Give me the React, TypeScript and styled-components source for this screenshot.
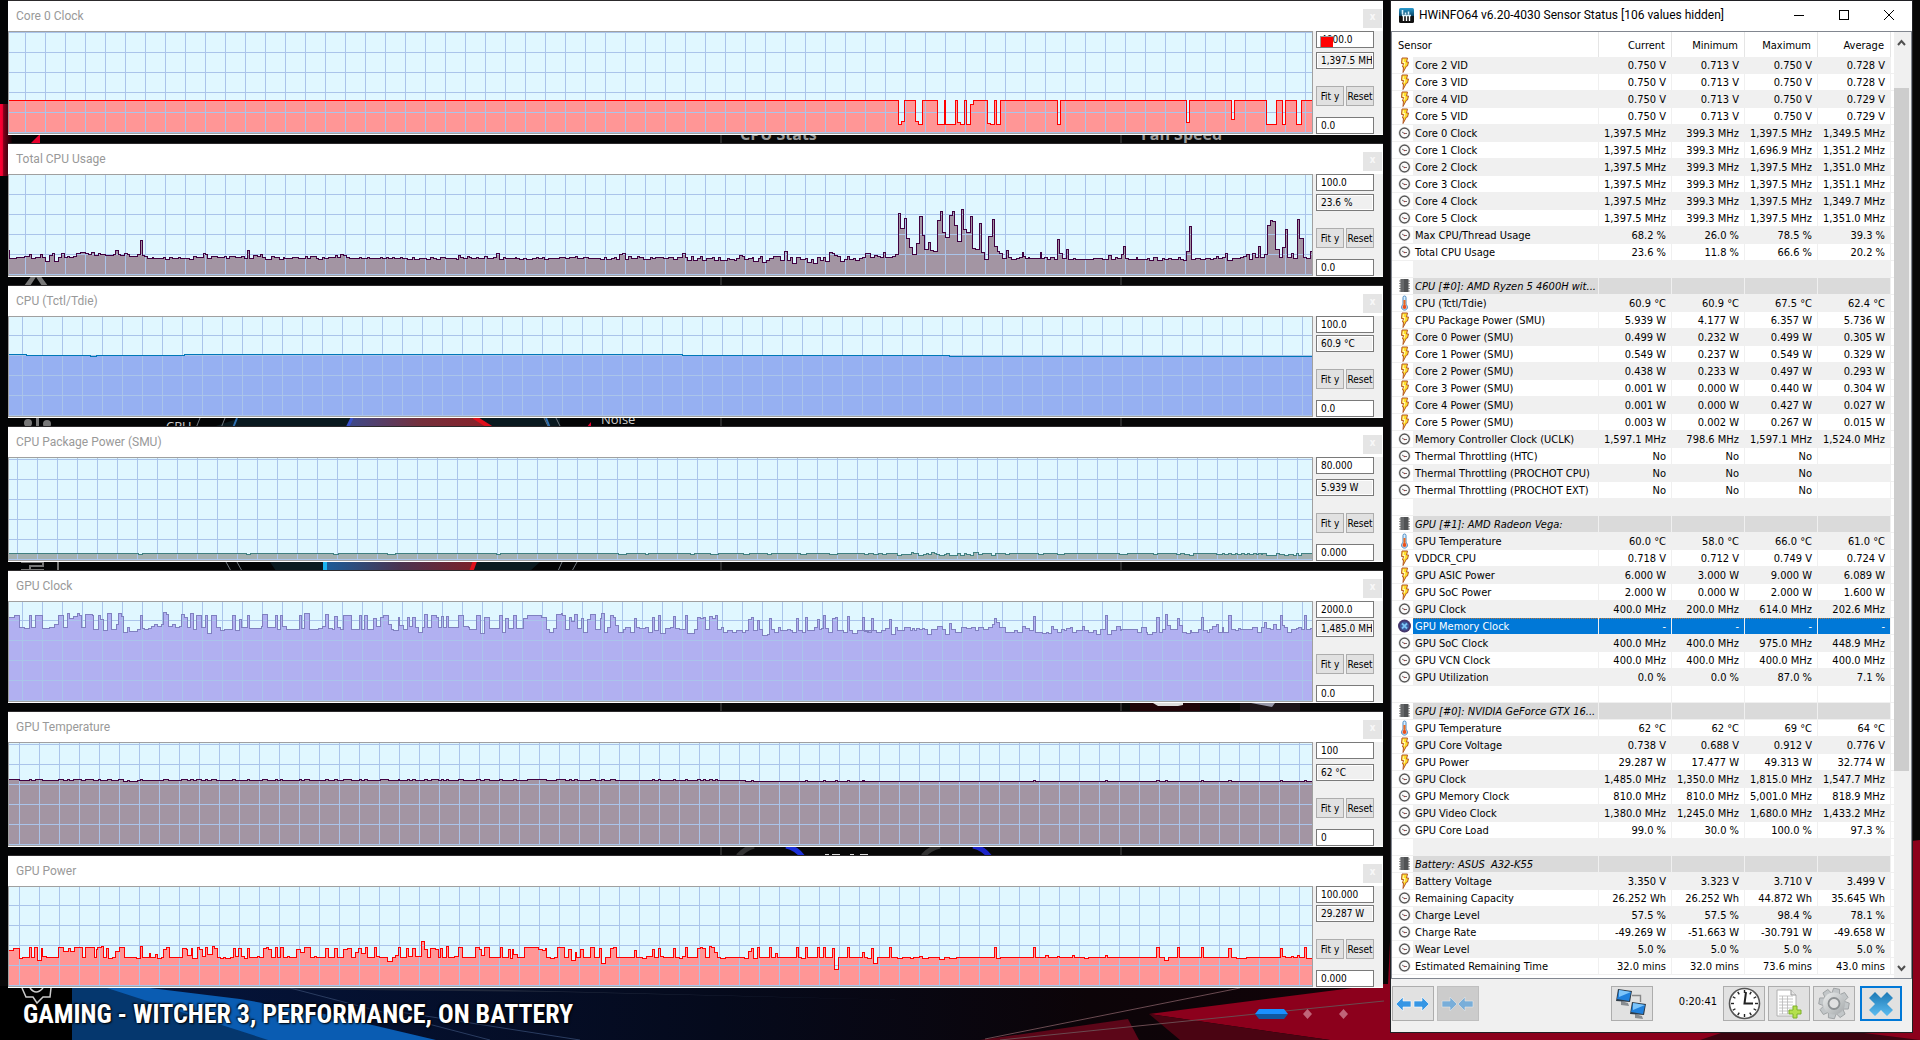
import React, { useId } from "react";
import styled, { createGlobalStyle, css } from "styled-components";

/* ---------- theme ---------- */

const UI = `"DejaVu Sans Condensed", "Noto Sans", sans-serif`;
const TITLE = `Roboto, "Open Sans", sans-serif`;

const GlobalStyle = createGlobalStyle`
  *, *::before, *::after { box-sizing: border-box; }
  body { margin: 0; background: #050506; font-family: ${UI}; font-size: 11px; color: #000; }
  button, input { font: inherit; color: inherit; }
`;

/* ---------- graph data ---------- */

type Point = [number, number];

/* A stretch of recorded samples: where it starts, samples per pixel, and "x:y" steps. */
const stretch = (x0: number, perPx: number, y0: number, steps: string): Point[] =>
  steps
    .trim()
    .split(/\s+/)
    .map((s) => {
      const [x, y] = s.split(":").map(Number);
      return [Math.round(x0 + x / perPx), Math.floor(y0 + y / 3)];
    });

const coreClock: Point[] = [
  [8, 100],
  ...stretch(860, 2.958, 0, `0:301 111:373 122:364 131:301 164:364 172:373 184:301 227:373 247:301 252:373 282:301
  288:367 297:373 309:301 315:373 326:313 335:301 377:370 386:373 397:301 403:373 415:301 582:373 593:301 963:367
  974:301 1096:358 1107:301 1202:373 1232:301 1247:373 1258:301 1291:373 1303:301`),
];

const cpuUsage: Point[] = [
  ...stretch(0, 2.45, 0, `20:751 23:775 40:772 60:769 70:763 75:775 85:772 98:763 104:772 110:784 120:766 128:760
  133:784 143:772 150:760 156:772 163:769 170:772 180:769 187:760 195:757 208:760 215:763 224:757 230:766 240:760
  245:763 258:766 276:763 282:751 288:763 294:766 305:760 311:763 317:769 335:763 342:721 347:766 354:769 360:775
  372:772 376:775 400:772 405:778 415:772 421:775 437:772 441:775 463:778 474:769 480:772 497:760 503:763 508:775
  518:769 532:772 549:769 554:775 561:769 575:772 590:769 598:775 606:751 611:775 621:766 630:769 637:763 641:772
  649:778 665:769 671:772 684:778 694:772 697:775 715:772 731:775 747:769 752:775 760:769 773:775 780:778 790:772
  795:775 803:772 820:766 826:772 834:763 840:766 848:772 854:775 880:772 884:775 900:772 905:775 931:772 935:775
  946:772 951:775 960:772 965:775 981:772 986:775 996:778 1010:772 1015:778 1026:775 1044:778 1054:772 1060:775
  1067:778 1077:772 1090:775 1116:778 1121:766 1127:772 1135:775 1143:769 1149:772 1155:775 1165:772 1171:775
  1187:769 1192:775 1208:772 1216:760 1222:778 1233:772 1238:775 1261:772 1265:775 1272:778 1282:775 1288:778
  1304:775 1312:772 1318:775 1328:772 1334:778 1342:775 1370:772 1385:775 1395:772 1408:769 1413:775 1429:772
  1441:775`),
  ...stretch(600, 3, 90, `0:508 12:502 18:508 32:505 42:502 48:508 57:493 67:490 74:508 85:499 92:505 112:499 118:502
  128:508 149:502 155:505 166:502 190:505 203:502 215:502 218:508 230:502 247:490 254:502 261:511 273:499 280:511
  290:505 300:499 307:511 318:505 337:502 343:511 355:502 361:511 382:505 388:508 402:511 409:505 417:496 426:499
  433:508 445:505 455:502 460:514 473:505 480:499 487:517 499:511 508:505 520:499 541:511 553:484 560:511 571:502
  577:520 589:502 601:508 615:505 622:517 633:508 640:520 652:502 659:511 670:502 676:514 688:487 697:490 703:496
  712:499 721:514 733:508 741:499 748:508 760:505 766:511 778:505 787:502 796:490 811:502 823:496 832:499 841:502
  850:487 856:502 877:499 886:493`),
  ...stretch(860, 2.958, 0, `113:640 119:685 131:655 137:715 145:741 154:763 167:730 176:649 182:706 190:747 202:727
  208:751 217:754 229:661 238:634 244:697 252:712 264:646 273:634 279:676 288:724 300:628 306:688 315:697 326:649
  332:745 340:748 353:670 359:757 368:778 380:709 389:658 395:739 404:754 412:760 421:775 433:751 439:772 447:778
  460:775 470:772 478:757 483:769 489:775 496:772 501:775 516:774 531:757 536:775 545:772 552:778 563:772 574:778
  584:718 590:760 598:775 610:748 616:778 630:775 636:778 690:775 715:778 735:766 741:778 753:772 760:776 771:763
  779:739 785:775 792:778 816:772 820:778 850:775 856:781 868:772 880:781 892:775 900:779 912:775 920:779 940:772
  946:778 954:781 965:754 974:679 980:778 992:775 1007:778 1020:775 1035:779 1045:775 1054:769 1060:775 1070:772
  1081:760 1087:781 1099:775 1125:772 1134:769 1143:763 1150:778 1161:760 1167:771 1178:739 1184:772 1196:763
  1205:676 1214:661 1220:664 1229:748 1238:773 1249:742 1258:688 1264:772 1276:760 1282:775 1294:658 1300:715
  1309:772 1318:775 1330:754`),
];

const cpuTemp: Point[] = [[8, 354], [26, 355], [90, 356], [96, 355], [184, 354], [682, 355], [949, 356]];

const cpuPower: Point[] = [
  ...stretch(0, 2.45, 400, `20:460 339:463 349:460 603:463 613:460 817:463 827:460 949:463 967:460 1214:463 1224:460
  1515:463 1533:460 1580:463 1588:460 1690:463 1700:460 1740:463 1760:460 1820:463 1835:460 1880:463 1890:460
  1960:463 1975:460 2030:463 2050:460`),
  ...stretch(860, 2.958, 400, `0:460 12:463 25:460 38:463 52:460 65:463 78:460 110:466 122:463 150:457 158:460 173:466
  185:463 196:460 202:463 210:457 218:460 226:463 234:466 248:463 255:460 262:466 288:460 297:466 309:460 315:463
  325:466 335:457 350:463 362:460 388:466 398:460 430:463 442:460 527:463 540:460 582:463 602:460 766:463 789:460
  866:463 878:460 936:463 948:460 957:463 972:466 984:460 1052:463 1070:460 1078:463 1090:460 1098:463 1108:460
  1115:463 1128:460 1135:463 1145:460 1150:463 1163:460 1170:463 1178:460 1185:463 1190:460 1202:466 1232:460
  1240:463 1255:466 1265:463 1282:466 1290:460 1296:466 1303:460`),
];

const gpuClock: Point[] = [
  ...stretch(0, 2.45, 400, `20:652 34:646 46:682 58:685 70:646 75:682 85:646 104:685 119:682 133:673 143:646 155:682
  165:640 170:655 180:649 188:640 194:646 199:682 209:643 226:646 229:688 239:646 244:658 252:691 261:640 272:688
  283:673 290:640 296:649 302:697 312:682 317:694 335:688 342:646 347:685 354:688 362:685 370:679 378:673 385:679
  394:673 400:637 406:643 412:679 422:673 428:682 438:679 444:643 450:652 457:682 466:640 472:688 481:646 493:682
  503:646 508:700 518:646 530:682 538:691 550:688 569:646 575:691 585:658 590:682 604:646 611:685 640:679 643:643
  655:682 673:646 678:688 687:646 692:679 700:688 732:646 737:685 746:640 758:688 778:685 790:679 797:643 803:685
  813:688 819:649 825:682 832:688 841:646 861:688 880:646 884:688 892:646 898:688 914:655 922:679 930:652 938:646
  950:673 957:688 964:691 974:652 978:676 987:688 996:652 1002:679 1010:652 1016:682 1024:697 1033:682 1040:643
  1046:682 1055:646 1067:652 1072:682 1080:649 1086:682 1093:649 1098:682 1122:646 1134:679 1147:682 1150:688
  1165:646 1177:700 1187:652 1199:685 1223:646 1230:697 1238:655 1245:685 1257:646 1265:685 1282:655 1290:646
  1325:652 1338:688 1346:697 1356:685 1363:643 1375:640 1378:646 1385:688 1393:652 1400:664 1407:643 1413:685
  1423:655 1428:697 1438:658 1445:643 1457:688`),
  ...stretch(600, 3, 590, `0:85 4:70 11:127 22:112 31:76 39:82 46:106 55:127 68:118 76:112 91:127 103:85 109:112
  118:115 135:112 145:127 157:82 163:121 175:76 181:130 194:115 210:112 220:79 226:115 236:118 256:76 262:130
  283:118 292:82 300:85 310:82 316:118 328:79 335:85 346:76 352:118 362:112 370:127 382:121 397:127 409:121 425:127
  436:121 445:88 454:82 460:121 472:91 478:118 487:136 500:133 508:85 514:118 523:127 535:112 541:121 562:118
  570:121 577:127 589:85 595:121 607:127 616:82 622:121 643:112 652:88 658:118 664:115 670:76 676:115 685:127
  697:85 706:82 712:121 730:127 742:79 748:121 757:130 770:121 787:82 793:124 805:127 814:85 820:121`),
  ...stretch(860, 2.958, 400, `0:691 7:652 13:691 22:697 34:655 39:691 48:697 63:691 75:685 87:658 93:703 104:682
  110:691 130:682 147:691 155:685 160:691 167:685 175:688 184:685 190:688 199:703 211:688 228:679 244:688 252:703
  264:670 270:688 280:697 300:682 315:685 327:682 341:691 350:682 365:688 380:682 389:673 397:655 403:667 410:682
  430:697 455:691 464:697 479:679 487:685 500:691 513:649 519:697 537:700 550:697 555:700 566:679 572:688 582:697
  595:688 602:691 610:685 620:682 627:697 640:691 656:679 662:691 675:697 690:691 699:703 711:688 726:646 732:703
  743:691 758:679 768:691 773:688 820:697 832:682 845:697 850:703 865:697 877:652 883:697 892:688 903:643 909:676
  918:688 938:655 944:676 953:697 963:700 975:691 980:697 1000:688 1010:652 1016:691 1025:697 1033:688 1040:679
  1052:673 1060:697 1070:682 1075:697 1090:646 1096:688 1110:691 1117:685 1125:688 1160:682 1175:697 1187:682
  1196:667 1202:685 1214:688 1222:673 1230:688 1241:646 1247:676 1255:682 1264:697 1276:688 1290:685 1297:682
  1303:688 1312:646 1318:688 1330:685`),
];

/* The temperature follows the clock by a degree: every boost shows as a one-pixel bump. */
const gpuTemp: Point[] = gpuClock.map(([x, y]) => {
  const rest = x < 745 ? 780 : 781;
  return [x, y < 618 ? rest - 1 : x > 60 && x < 140 && y > 630 ? 781 : rest];
});

const gpuPower: Point[] = [
  ...stretch(0, 2.24, 820, `18:391 30:385 42:415 50:412 65:382 70:412 77:382 82:421 91:385 95:409 103:412 131:382
  141:394 152:385 157:394 165:382 183:412 191:382 210:412 215:388 218:382 226:379 230:412 238:385 243:415 252:412
  258:394 266:382 277:412 305:415 313:379 317:412 333:400 337:412 347:403 352:415 361:412 366:388 372:382 378:412
  407:385 416:388 419:406 427:385 431:415 441:382 446:388 453:409 459:382 464:403 474:379 479:385 485:412 492:415
  500:412 503:415 515:412 521:385 526:409 534:385 540:409 546:415 554:385 558:412 575:409 580:412 588:385 596:382
  600:388 606:412 615:382 620:412 628:382 634:412 643:409 647:412 662:388 672:397 682:382 694:412 704:409 708:412
  729:385 735:412 749:385 754:412 768:388 778:385 787:412 796:397 802:385 809:400 817:382 822:412 837:382 842:409
  850:412 866:424 877:412 885:406 892:382 896:412 910:385 915:409 924:385 929:409 944:364 949:388 956:412 963:385
  975:388 981:412 985:385 991:412 998:379 1003:412 1018:409 1025:382 1035:412 1065:382 1073:388 1077:406 1085:382
  1096:412 1119:382 1125:412 1137:388 1142:415 1146:388 1150:403 1158:412 1173:382 1205:388 1213:391 1220:385
  1223:412 1231:415 1240:412 1247:382 1264:412 1272:388 1278:421 1287:397 1290:412 1300:388 1306:412 1321:382
  1331:412 1341:385`),
  ...stretch(600, 3, 590, `2:1120 14:1102 31:1075 40:1072 47:1102 103:1081 109:1102 127:1105 139:1099 157:1078
  163:1102 175:1075 181:1099 190:1102 220:1075 226:1102 236:1105 247:1099 256:1072 262:1102 292:1075 301:1072
  306:1075 316:1102 328:1069 334:1072 343:1087 352:1102 361:1105 374:1102 433:1105 445:1084 454:1075 460:1105
  472:1072 478:1102 508:1072 514:1102 526:1090 532:1102 589:1072 595:1102 604:1105 616:1072 622:1102 652:1072
  658:1102 670:1072 676:1102 697:1075 703:1138 715:1102 742:1072 748:1102`),
  ...stretch(860, 2.958, 820, `0:412 7:397 13:412 22:415 34:385 39:430 51:412 87:382 93:412 110:415 123:412 147:415
  158:412 176:409 182:415 202:412 235:418 247:412 262:415 283:412 397:382 403:415 415:412 513:382 519:412 548:406
  555:412 584:409 590:412 628:406 634:412 662:415 673:412 726:406 732:412 877:382 883:412 900:421 912:412 939:382
  945:412 1010:382 1016:412 1090:385 1096:412 1113:415 1143:412 1241:385 1247:409 1256:412 1276:409 1282:412
  1294:406 1300:412 1312:382 1318:415`),
];

interface Graph {
  title: string;
  max: string;
  now: string;
  min: string;
  top: number; /* first plotted row */
  height: number;
  phase: number; /* shift of the vertical grid lines */
  line: string;
  fill: string;
  data: Point[];
  swatch?: boolean;
}

const RED = { line: "#ff0000", fill: "#ff9696" };
const PLUM = { line: "#400040", fill: "#a395a3" };

const graphs: Graph[] = [
  { title: "Core 0 Clock", max: "4000.0", now: "1,397.5 MHz", min: "0.0", top: 31, height: 103, phase: 16, ...RED, data: coreClock, swatch: true },
  { title: "Total CPU Usage", max: "100.0", now: "23.6 %", min: "0.0", top: 174, height: 102, phase: 16, ...PLUM, data: cpuUsage },
  { title: "CPU (Tctl/Tdie)", max: "100.0", now: "60.9 °C", min: "0.0", top: 316, height: 101, phase: 13, line: "#0078b8", fill: "#96b0f2", data: cpuTemp },
  { title: "CPU Package Power (SMU)", max: "80.000", now: "5.939 W", min: "0.000", top: 457, height: 104, phase: 8, line: "#408080", fill: "#a3b1b1", data: cpuPower },
  { title: "GPU Clock", max: "2000.0", now: "1,485.0 MHz", min: "0.0", top: 601, height: 101, phase: 13, line: "#8080c0", fill: "#b1b0f1", data: gpuClock },
  { title: "GPU Temperature", max: "100", now: "62 °C", min: "0", top: 742, height: 104, phase: 10, ...PLUM, data: gpuTemp },
  { title: "GPU Power", max: "100.000", now: "29.287 W", min: "0.000", top: 886, height: 101, phase: 10, ...RED, data: gpuPower },
];

/* ---------- sensor data ---------- */

type Kind = "bolt" | "clock" | "temp" | "chip" | "off";
type Row = { kind?: Kind; name?: string; values?: string[] };

const unit = (kind: Kind, name: string, u: string, v: string): Row => ({
  kind,
  name,
  values: v.split(" ").map((n) => `${n}${u}`),
});
const group = (name: string): Row => ({ kind: "chip", name });

const rows: Row[] = [
  unit("bolt", "Core 2 VID", " V", "0.750 0.713 0.750 0.728"),
  unit("bolt", "Core 3 VID", " V", "0.750 0.713 0.750 0.728"),
  unit("bolt", "Core 4 VID", " V", "0.750 0.713 0.750 0.729"),
  unit("bolt", "Core 5 VID", " V", "0.750 0.713 0.750 0.729"),
  unit("clock", "Core 0 Clock", " MHz", "1,397.5 399.3 1,397.5 1,349.5"),
  unit("clock", "Core 1 Clock", " MHz", "1,397.5 399.3 1,696.9 1,351.2"),
  unit("clock", "Core 2 Clock", " MHz", "1,397.5 399.3 1,397.5 1,351.0"),
  unit("clock", "Core 3 Clock", " MHz", "1,397.5 399.3 1,397.5 1,351.1"),
  unit("clock", "Core 4 Clock", " MHz", "1,397.5 399.3 1,397.5 1,349.7"),
  unit("clock", "Core 5 Clock", " MHz", "1,397.5 399.3 1,397.5 1,351.0"),
  unit("clock", "Max CPU/Thread Usage", " %", "68.2 26.0 78.5 39.3"),
  unit("clock", "Total CPU Usage", " %", "23.6 11.8 66.6 20.2"),
  {},
  group("CPU [#0]: AMD Ryzen 5 4600H wit..."),
  unit("temp", "CPU (Tctl/Tdie)", " °C", "60.9 60.9 67.5 62.4"),
  unit("bolt", "CPU Package Power (SMU)", " W", "5.939 4.177 6.357 5.736"),
  unit("bolt", "Core 0 Power (SMU)", " W", "0.499 0.232 0.499 0.305"),
  unit("bolt", "Core 1 Power (SMU)", " W", "0.549 0.237 0.549 0.329"),
  unit("bolt", "Core 2 Power (SMU)", " W", "0.438 0.233 0.497 0.293"),
  unit("bolt", "Core 3 Power (SMU)", " W", "0.001 0.000 0.440 0.304"),
  unit("bolt", "Core 4 Power (SMU)", " W", "0.001 0.000 0.427 0.027"),
  unit("bolt", "Core 5 Power (SMU)", " W", "0.003 0.002 0.267 0.015"),
  unit("clock", "Memory Controller Clock (UCLK)", " MHz", "1,597.1 798.6 1,597.1 1,524.0"),
  unit("clock", "Thermal Throttling (HTC)", "", "No No No"),
  unit("clock", "Thermal Throttling (PROCHOT CPU)", "", "No No No"),
  unit("clock", "Thermal Throttling (PROCHOT EXT)", "", "No No No"),
  {},
  group("GPU [#1]: AMD Radeon Vega:"),
  unit("temp", "GPU Temperature", " °C", "60.0 58.0 66.0 61.0"),
  unit("bolt", "VDDCR_CPU", " V", "0.718 0.712 0.749 0.724"),
  unit("bolt", "GPU ASIC Power", " W", "6.000 3.000 9.000 6.089"),
  unit("bolt", "GPU SoC Power", " W", "2.000 0.000 2.000 1.600"),
  unit("clock", "GPU Clock", " MHz", "400.0 200.0 614.0 202.6"),
  unit("off", "GPU Memory Clock", "", "- - - -"),
  unit("clock", "GPU SoC Clock", " MHz", "400.0 400.0 975.0 448.9"),
  unit("clock", "GPU VCN Clock", " MHz", "400.0 400.0 400.0 400.0"),
  unit("clock", "GPU Utilization", " %", "0.0 0.0 87.0 7.1"),
  {},
  group("GPU [#0]: NVIDIA GeForce GTX 16..."),
  unit("temp", "GPU Temperature", " °C", "62 62 69 64"),
  unit("bolt", "GPU Core Voltage", " V", "0.738 0.688 0.912 0.776"),
  unit("bolt", "GPU Power", " W", "29.287 17.477 49.313 32.774"),
  unit("clock", "GPU Clock", " MHz", "1,485.0 1,350.0 1,815.0 1,547.7"),
  unit("clock", "GPU Memory Clock", " MHz", "810.0 810.0 5,001.0 818.9"),
  unit("clock", "GPU Video Clock", " MHz", "1,380.0 1,245.0 1,680.0 1,433.2"),
  unit("clock", "GPU Core Load", " %", "99.0 30.0 100.0 97.3"),
  {},
  group("Battery: ASUS  A32-K55"),
  unit("bolt", "Battery Voltage", " V", "3.350 3.323 3.710 3.499"),
  unit("clock", "Remaining Capacity", " Wh", "26.252 26.252 44.872 35.645"),
  unit("clock", "Charge Level", " %", "57.5 57.5 98.4 78.1"),
  unit("clock", "Charge Rate", " W", "-49.269 -51.663 -30.791 -49.658"),
  unit("clock", "Wear Level", " %", "5.0 5.0 5.0 5.0"),
  unit("clock", "Estimated Remaining Time", " mins", "32.0 32.0 73.6 43.0"),
];

/* ---------- page layout ---------- */

const Desktop = styled.div`
  position: relative;
  isolation: isolate;
  display: flex;
  gap: 8px;
  min-height: 100vh;
  padding: 0 8px;
  overflow: hidden;
`;

const Wallpaper = styled.svg`
  position: absolute;
  inset: 0;
  z-index: -1;
  width: 100%;
  height: 100%;
`;

const Graphs = styled.main`
  flex: 1;
  min-width: 0;
  display: flex;
  flex-direction: column;
  gap: 9px;
  padding-top: 1px;
`;

const Panel = styled.section`
  background: #fff;
  padding-bottom: 1px;
  box-shadow: 0 -1px 0 #2c2a2c;
`;

const PanelTitle = styled.header`
  display: flex;
  align-items: center;
  justify-content: space-between;
  height: 30px;
  padding: 4px 1px 0 8px;
  h2 {
    margin: 0 0 4px;
    font: 400 12px/16px ${TITLE};
    color: #999;
  }
`;

const PanelClose = styled.button`
  width: 19px;
  height: 19px;
  padding: 0 0 2px;
  border: 0;
  background: #e5e5e5;
  color: #f8f8f8;
  font: 700 11px/16px ${TITLE};
`;

const PanelBody = styled.div<{ $height: number }>`
  display: flex;
  height: ${(p) => p.$height}px;
  background: #f0f0f0;
`;

const Plot = styled.div`
  flex: 1;
  min-width: 0;
  border: 1px solid #a0a0a0;
  background: #e0f7ff;
  svg {
    display: block;
    width: 100%;
    height: 100%;
  }
`;

const Controls = styled.div`
  position: relative;
  display: flex;
  flex-direction: column;
  width: 70px;
  padding: 0 9px 0 3px;
`;

const Field = styled.input`
  width: 100%;
  height: 17px;
  padding: 0 1px 0 4px;
  border: 1px solid #7a7a7a;
  border-radius: 0;
  background: #fff;
  font-size: 10px;
  &:read-only {
    margin: auto 0 17px;
    background: #f0f0f0;
    box-shadow: inset 0 0 0 1px #fff;
  }
`;

const Pair = styled.div`
  display: flex;
  gap: 2px;
  margin-bottom: 11px;
`;

const SmallButton = styled.button`
  flex: 1;
  height: 20px;
  padding: 0;
  border: 1px solid #adadad;
  background: #e1e1e1;
  font-size: 10px;
  white-space: nowrap;
`;

const Swatch = styled.span`
  position: absolute;
  top: 5px;
  left: 7px;
  width: 13px;
  height: 11px;
  border: solid #999;
  border-width: 1px 0 0 1px;
  background: #f00;
`;

const Caption = styled.footer`
  flex: 1;
  display: flex;
  align-items: center;
  justify-content: space-between;
  min-height: 44px;
  margin-top: -9px;
  padding: 0 34px 0 15px;
  h1 {
    margin: 0;
    font: 700 26px/40px "Roboto Condensed", "Open Sans Condensed", Roboto, sans-serif;
    color: #fff;
    text-shadow: 1px 1px 2px #000, -1px -1px 2px #000;
    white-space: nowrap;
  }
`;

/* ---------- sensor window ---------- */

const Window = styled.section`
  flex: none;
  display: flex;
  flex-direction: column;
  width: 521px;
  margin: 1px 0 8px;
  background: #f0f0f0;
  box-shadow: 0 0 0 1px #202024;
`;

const TitleBar = styled.header`
  display: flex;
  align-items: center;
  height: 30px;
  padding: 0 17px 2px 8px;
  background: #fff;
  h2 {
    flex: 1;
    margin: 0 0 0 5px;
    font: 400 12px/16px ${TITLE};
    white-space: nowrap;
  }
`;

const WindowButton = styled.button`
  display: flex;
  width: 12px;
  height: 12px;
  margin-left: 33px;
  padding: 0;
  border: 0;
  background: none;
`;

const List = styled.div`
  flex: 1;
  display: flex;
  border: 1px solid #828790;
  background: #fff;
`;

const Table = styled.table`
  flex: 1;
  align-self: flex-start;
  table-layout: fixed;
  border-collapse: separate;
  border-spacing: 0;
  width: 0;
`;

const Head = styled.th<{ $left?: boolean }>`
  height: 25px;
  padding: 2px 6px 0;
  border-right: 1px solid #e5e5e5;
  font-weight: 400;
  text-align: ${(p) => (p.$left ? "left" : "right")};
`;

const dots = "repeating-linear-gradient(90deg, #c07838 0 1px, #0078d7 1px 2px) top / 100% 1px no-repeat #0078d7";

const Line = styled.tr<{ $odd: boolean; $kind?: Kind }>`
  --fill: ${(p) => (p.$kind === "off" ? dots : p.$kind === "chip" ? "#dadada" : p.$odd ? "#fff" : "#f0f0f0")};
  ${(p) => p.$kind === "off" && css`color: #fff;`}
  ${(p) => p.$kind === "chip" && css`font-style: italic;`}
`;

const Cell = styled.td`
  height: 17px;
  padding: 2px 5px 0 0;
  border: solid #f0f0f0;
  border-width: 0 1px 1px 0;
  background: var(--fill);
  line-height: 14px;
  text-align: right;
  white-space: pre;
  &:last-child { border-right: 0; background: #fff; }
`;

const NameCell = styled(Cell)`
  padding: 2px 0 0 2px;
  text-align: left;
  overflow: hidden;
`;

const IconCell = styled(Cell)`
  padding: 0 0 0 6px;
  border-right: 0;
  background: #fff;
  svg { display: block; }
`;

const ScrollBar = styled.div`
  display: flex;
  flex-direction: column;
  width: 17px;
  padding-right: 2px;
  background: #f0f0f0;
`;

const ScrollButton = styled.button`
  height: 20px;
  padding: 0;
  border: 0;
  background: none;
`;

const Track = styled.div`
  flex: 1;
  padding-top: 36px;
`;

const Thumb = styled.div`
  height: 80%;
  max-height: 683px;
  background: #cdcdcd;
`;

const ToolBar = styled.footer`
  display: flex;
  gap: 3px;
  height: 53px;
  padding: 7px 10px 0 1px;
`;

const Tool = styled.button<{ $state?: "off" | "focus" }>`
  display: grid;
  place-items: center;
  width: 42px;
  height: 35px;
  padding: 0;
  border: 1px solid #adadad;
  background: #e1e1e1;
  ${(p) => p.$state === "off" && css`background: #ccc; border-color: #bfbfbf;`}
  ${(p) => p.$state === "focus" && css`border: 2px solid #0078d7; margin-left: 2px;`}
`;

const Spacer = styled.span`
  flex: 1;
`;

const Elapsed = styled.time`
  width: 64px;
  padding-right: 3px;
  line-height: 32px;
  text-align: right;
`;

/* ---------- icons ---------- */

const Bolt = () => (
  <svg width="14" height="16" viewBox="0 0 14 16">
    <path d="M4 1H9.500L8.500 5H10.500L9.500 9H8.500L5 15.500L5.500 10H4.500L5.500 6.500H3.500Z" fill="#ffdf2a" stroke="#b4582a" />
    <path d="M5.500 2.500L5 5.500H7L6 9" fill="none" stroke="#fff8c0" />
  </svg>
);

const Clock = () => (
  <svg width="14" height="16" viewBox="0 0 14 16">
    <circle cx="6.500" cy="8" r="6" fill="#c8c8c8" />
    <circle cx="6.500" cy="8" r="4.800" fill="#fafafa" stroke="#505050" strokeWidth="1.200" />
    <path d="M4 7L6.500 8.500H9" fill="none" stroke="#707070" />
    <circle cx="6.500" cy="8.500" r=".7" fill="#b03030" />
  </svg>
);

const Thermo = () => (
  <svg width="14" height="16" viewBox="0 0 14 16">
    <path d="M5 2.500a1.500 1.500 0 0 1 3 0V9.500a3 3 0 1 1-3 0Z" fill="#d8efff" stroke="#4a88c0" />
    <rect x="5.500" y="5" width="2" height="6" fill="#f06a1e" />
    <circle cx="6.500" cy="12" r="2" fill="#e8501e" />
  </svg>
);

const Chip = () => (
  <svg width="14" height="16" viewBox="0 0 14 16">
    <path d="M1 3H12M1 5.500H12M1 8H12M1 10.500H12M1 13H12" stroke="#909090" />
    <rect x="2.500" y="1" width="8" height="13" fill="#505254" />
    <rect x="3" y="1" width="3" height="13" fill="#66686a" />
  </svg>
);

const Off = () => (
  <svg width="14" height="16" viewBox="0 0 14 16">
    <circle cx="6.500" cy="8" r="6.500" fill="#46376e" />
    <circle cx="6.500" cy="8" r="4.600" fill="#3c5a9c" />
    <path d="M4 5.500L9 10.500M9 5.500L4 10.500" stroke="#7cc4f4" strokeWidth="1.800" />
  </svg>
);

const icons: Record<Kind, React.FC> = { bolt: Bolt, clock: Clock, temp: Thermo, chip: Chip, off: Off };

const AppIcon = () => (
  <svg width="15" height="15" viewBox="0 0 15 15">
    <defs>
      <linearGradient id="app" x2="0" y2="1">
        <stop offset="0" stopColor="#2a9cd0" />
        <stop offset=".5" stopColor="#0c4a6c" />
        <stop offset=".55" stopColor="#111" />
      </linearGradient>
    </defs>
    <rect width="15" height="15" rx="1.5" fill="url(#app)" />
    <path d="M3.500 2V6.500M6.500 4.500V6.500M9.500 3.500V6.500M3 7.500H12" stroke="#d8f2ff" strokeWidth="1.600" />
    <path d="M4.500 8V13M7.500 8V13M10.500 8V13" stroke="#fff" strokeWidth="1.400" />
  </svg>
);

const LEFT_ARROW = "M1 9L8 2V6H16V12H8V16Z";
const RIGHT_ARROW = "M17 9L10 2V6H2V12H10V16Z";

const Arrows = ({ inward }: { inward?: boolean }) => (
  <svg width="36" height="22" viewBox="0 -2 36 22" opacity={inward ? 0.55 : 1} fill="#3696e4" stroke="#fff" strokeWidth=".6">
    <path d={inward ? RIGHT_ARROW : LEFT_ARROW} />
    <path d={inward ? LEFT_ARROW : RIGHT_ARROW} transform="translate(17 0)" />
  </svg>
);

const Monitor = ({ x, y }: { x: number; y: number }) => (
  <g transform={`translate(${x} ${y})`}>
    <path d="M5 12L12 14L13 17L5 16Z" fill="#888c90" />
    <path d="M2 0L16 2L14 13L0 12Z" fill="#2f3c48" />
    <path d="M3 1L15 3L13 12L1 10Z" fill="#2080dc" />
    <path d="M3 1L15 3L3 8Z" fill="#7cc4fa" />
  </g>
);

const Network = () => (
  <svg width="34" height="32" viewBox="0 0 34 32">
    <path d="M17 7.500H25.500V14" fill="none" stroke="#888" strokeWidth="1.400" />
    <Monitor x={1} y={1} />
    <Monitor x={15} y={14} />
  </svg>
);

const BigClock = () => (
  <svg width="33" height="33" viewBox="0 0 33 33">
    <circle cx="16.500" cy="16.500" r="15" fill="#fff" stroke="#555" strokeWidth="1.600" />
    <g stroke="#222" strokeWidth="1.400">
      {Array.from({ length: 12 }, (_, i) => (
        <path key={i} d="M16.500 3V6" transform={`rotate(${i * 30} 16.500 16.500)`} />
      ))}
    </g>
    <path d="M18 5L16.500 16.500H25" fill="none" stroke="#222" strokeWidth="2" />
  </svg>
);

const Sheet = () => (
  <svg width="30" height="32" viewBox="0 0 30 32">
    <path d="M3 2H17L22 7V28H3Z" fill="#fff" stroke="#b0b0b0" />
    <path d="M17 2V7H22" fill="#e4e4e4" stroke="#999" />
    <path d="M5 8H19M5 11H19M5 14H19M5 17H19M5 20H19M5 23H15M5 26H15M8.500 8V26M13.500 8V26" stroke="#b8b8b8" strokeWidth=".8" />
    <path d="M19 18H23V22H27V26H23V30H19V26H15V22H19Z" fill="#b4e04c" stroke="#7cb028" />
  </svg>
);

const Gear = () => (
  <svg width="34" height="33" viewBox="0 0 34 33">
    <defs>
      <linearGradient id="gear" x2="1" y2="1">
        <stop offset="0" stopColor="#eceeee" />
        <stop offset="1" stopColor="#a4a8aa" />
      </linearGradient>
    </defs>
    <g fill="#c2c6c8" stroke="#989c9e" strokeWidth=".8">
      {Array.from({ length: 8 }, (_, i) => (
        <path key={i} d="M13 7L14 1.500H20L21 7Z" transform={`rotate(${i * 45 + 10} 17 16.500)`} />
      ))}
    </g>
    <circle cx="17" cy="16.500" r="11" fill="url(#gear)" />
    <circle cx="17" cy="16.500" r="5.500" fill="#e1e1e1" stroke="#8c9092" strokeWidth="1.800" />
  </svg>
);

const Cross = () => (
  <svg width="26" height="26" viewBox="0 0 26 26">
    <defs>
      <linearGradient id="cross" x2="0" y2="1">
        <stop offset="0" stopColor="#1c78b4" />
        <stop offset="1" stopColor="#5cbcf0" />
      </linearGradient>
    </defs>
    <path d="M7 1L13 7L19 1L25 7L19 13L25 19L19 25L13 19L7 25L1 19L7 13L1 7Z" fill="url(#cross)" />
  </svg>
);

const Chevron = ({ down }: { down?: boolean }) => (
  <svg width="9" height="7" viewBox="0 0 9 7">
    <path d={down ? "M1 1L4.500 5L8 1" : "M1 6L4.500 2L8 6"} fill="none" stroke="#505050" strokeWidth="2" />
  </svg>
);

const Pager = () => (
  <svg width="94" height="12" viewBox="0 0 94 12">
    <path d="M0 6L4 1H29L33 6Z" fill="#1a90ff" />
    <path d="M0 6L4 11H29L33 6Z" fill="#1058a0" />
    <path d="M48 6L52.500 1L57 6L52.500 11ZM84 6L88.500 1L93 6L88.500 11Z" fill="#c06478" />
  </svg>
);

const Backdrop = () => (
  <Wallpaper viewBox="0 0 1920 1040" preserveAspectRatio="none" aria-hidden="true">
    <defs>
      <linearGradient id="base">
        <stop offset="0" stopColor="#041640" />
        <stop offset=".35" stopColor="#050a1c" />
        <stop offset=".55" stopColor="#0c0408" />
        <stop offset="1" stopColor="#1c0308" />
      </linearGradient>
      <linearGradient id="edge">
        <stop offset="0" stopColor="#ff0033" />
        <stop offset=".2" stopColor="#f00030" />
        <stop offset=".3" stopColor="#80001a" />
        <stop offset="1" stopColor="#100004" />
      </linearGradient>
      <linearGradient id="dialTop">
        <stop offset="0" stopColor="#3c4a8c" />
        <stop offset=".5" stopColor="#74303c" />
        <stop offset="1" stopColor="#8a2028" />
      </linearGradient>
      <linearGradient id="dialBottom">
        <stop offset="0" stopColor="#1c5c98" />
        <stop offset=".5" stopColor="#4a3450" />
        <stop offset="1" stopColor="#7a2028" />
      </linearGradient>
    </defs>
    <rect width="1920" height="1040" fill="#080808" />
    <rect width="720" height="980" fill="#030405" />
    <path d="M721 0V960M1121 0V960" stroke="#2a2a2a" strokeWidth="2" />
    <rect y="104" width="12" height="72" fill="url(#edge)" />
    <path d="M30 144L40 134V144Z" fill="#e8002c" />
    <path d="M24 286L32 275H40L48 286H42L36 277L30 286Z" fill="#777" />
    <g fill="#777">
      <circle cx="28" cy="423" r="4" />
      <circle cx="47" cy="424" r="4" />
      <rect x="36" y="418" width="3" height="9" />
    </g>
    <path d="M21 562H43V566H30V571M21 570H44M58 562V571" fill="none" stroke="#777" strokeWidth="2" />
    <path d="M240 418H560V428H210Z" fill="#0a1a20" />
    <path d="M352 418H478L493 428H347Z" fill="url(#dialTop)" />
    <path d="M352 418L347 428" stroke="#3a50c8" strokeWidth="3" />
    <path d="M474 417L493 429" stroke="#e0101c" strokeWidth="4" />
    <path d="M200 418L196 428M225 418L221 428M544 418L549 428M556 418L561 428" stroke="#707880" />
    <path d="M237 418L233 428M546 418L550 428" stroke="#2e70b0" strokeWidth="2" />
    <path d="M270 562H540L530 571H276Z" fill="#0a1a20" />
    <path d="M326 562H474L471 571H326Z" fill="url(#dialBottom)" />
    <path d="M325 561V572" stroke="#1cb4f0" strokeWidth="4" />
    <path d="M475 561L471 572" stroke="#e0101c" strokeWidth="4" />
    <path d="M226 562L231 571M237 562L242 571M562 562L558 571M577 562L572 571" stroke="#707880" />
    <path d="M586 428L591 422V428Z" fill="#e8002c" />
    <g fontFamily="Open Sans, sans-serif" fill="#999">
      <text x="740" y="140" fontSize="16" fontWeight="700">CPU Stats</text>
      <text x="1141" y="140" fontSize="16" fontWeight="700">Fan Speed</text>
      <text x="166" y="431" fontSize="13" fill="#ccc">CPU</text>
      <text x="601" y="424" fontSize="13" fill="#ccc">Noise</text>
    </g>
    <path d="M1383 525H1386V537H1383" fill="none" stroke="#ccc" />
    <rect x="1388" y="534" width="2" height="2" fill="#ccc" />
    <rect x="1130" y="703" width="70" height="9" fill="#200408" />
    <rect x="1240" y="703" width="60" height="9" fill="#1c1418" />
    <path d="M1153 703H1183V705L1178 706H1158Z" fill="#ddd" />
    <path d="M1251 703H1275L1272 707Z" fill="#99a" />
    <path d="M738 856Q746 848 754 846" fill="none" stroke="#333" strokeWidth="5" />
    <path d="M786 846Q796 848 803 857" fill="none" stroke="#1c30d8" strokeWidth="5" />
    <path d="M825 854.500H829M832 854.500H840M850 854.500H854M860 854.500H868" stroke="#ddd" />
    <path d="M923 856Q930 848 940 846" fill="none" stroke="#333" strokeWidth="5" />
    <path d="M973 846Q983 848 990 857" fill="none" stroke="#1c24c8" strokeWidth="5" />
    <rect x="72" y="986" width="1848" height="54" fill="url(#base)" />
    <path d="M72 986H110L270 1040H72Z" fill="#05376e" />
    <path d="M107 988H150L240 999L330 1015L436 1040H268Z" fill="#0a5cb2" />
    <path d="M150 988H430L900 1000L560 992Z" fill="#20283c" />
    <path d="M290 988L490 1040M400 1012L580 1040" stroke="#2a3c60" />
    <rect y="986" width="72" height="54" fill="#000" />
    <path d="M22 988L26 997H33L37 1003L43 997H50L51 988M30 988Q36 996 43 988" fill="none" stroke="#ccc" strokeWidth="1.500" />
    <path d="M980 1040L1128 1019L1139 1040Z" fill="#5c0618" />
    <path d="M1149 1014L1384 984L1392 900L1920 840V1040H1330Z" fill="#8c001c" />
    <path d="M1149 1014L1330 1040H1180Z" fill="#4a0412" />
    <path d="M985 1039L1240 988M1000 1040L1384 1001" fill="none" stroke="#6a4a50" />
    <path d="M1383 0H1392V900L1388 984H1383Z" fill="#080607" />
    <path d="M1700 1040L1760 1020L1920 1040Z" fill="#3c0410" />
  </Wallpaper>
);

/* ---------- components ---------- */

const Chart = ({ graph }: { graph: Graph }) => {
  const id = useId();
  const h = graph.height - 2;
  const w = 1303;
  let path = "";
  graph.data.forEach(([x, y], i) => {
    const px = Math.max(0, x - 9) + 0.5;
    const py = y - graph.top - 1 + 0.5;
    path += i ? `H${px}V${py}` : `M-1 ${py}`;
  });
  path += `H${w + 2}`;
  return (
    <svg viewBox={`0 0 ${w} ${h}`} preserveAspectRatio="none" role="img" aria-label={graph.title} shapeRendering="crispEdges">
      <defs>
        <pattern id={id} width="20" height="20" x={graph.phase} y={h - 1} patternUnits="userSpaceOnUse">
          <path d="M0 .5H20M.5 0V20" stroke="#aac4ea" />
        </pattern>
      </defs>
      <path d={`${path}V${h + 2}H-1Z`} fill={graph.fill} />
      <rect width={w} height={h} fill={`url(#${id})`} />
      <path d={path} fill="none" stroke={graph.line} />
    </svg>
  );
};

const GraphPanel = ({ graph }: { graph: Graph }) => (
  <Panel>
    <PanelTitle>
      <h2>{graph.title}</h2>
      <PanelClose type="button">x</PanelClose>
    </PanelTitle>
    <PanelBody $height={graph.height}>
      <Plot>
        <Chart graph={graph} />
      </Plot>
      <Controls>
        <Field defaultValue={graph.max} aria-label={`${graph.title} maximum`} />
        <Field value={graph.now} readOnly aria-label={`${graph.title} current`} />
        <Pair>
          <SmallButton type="button">Fit y</SmallButton>
          <SmallButton type="button">Reset</SmallButton>
        </Pair>
        <Field defaultValue={graph.min} aria-label={`${graph.title} minimum`} />
        {graph.swatch && <Swatch />}
      </Controls>
    </PanelBody>
  </Panel>
);

const SensorRow = ({ row, odd }: { row: Row; odd: boolean }) => {
  const Icon = row.kind && icons[row.kind];
  return (
    <Line $odd={odd} $kind={row.kind}>
      <IconCell>{Icon && <Icon />}</IconCell>
      <NameCell>{row.name}</NameCell>
      {[0, 1, 2, 3].map((i) => (
        <Cell key={i}>{row.values?.[i]}</Cell>
      ))}
      <Cell />
    </Line>
  );
};

const SensorWindow = () => (
  <Window>
    <TitleBar>
      <AppIcon />
      <h2>HWiNFO64 v6.20-4030 Sensor Status [106 values hidden]</h2>
      <WindowButton type="button" aria-label="Minimize">
        <svg width="12" height="12"><path d="M1 6.500H11" stroke="#000" /></svg>
      </WindowButton>
      <WindowButton type="button" aria-label="Maximize">
        <svg width="12" height="12"><rect x="1.500" y="1.500" width="9" height="9" fill="none" stroke="#000" /></svg>
      </WindowButton>
      <WindowButton type="button" aria-label="Close">
        <svg width="12" height="12"><path d="M1 1L11 11M11 1L1 11" stroke="#000" /></svg>
      </WindowButton>
    </TitleBar>
    <List>
      <Table>
        <colgroup>
          <col style={{ width: 21 }} />
          <col />
          {[0, 1, 2, 3].map((i) => (
            <col key={i} style={{ width: 73 }} />
          ))}
          <col style={{ width: 3 }} />
        </colgroup>
        <thead>
          <tr>
            <Head $left colSpan={2}>Sensor</Head>
            <Head>Current</Head>
            <Head>Minimum</Head>
            <Head>Maximum</Head>
            <Head>Average</Head>
            <td />
          </tr>
        </thead>
        <tbody>
          {rows.map((row, i) => (
            <SensorRow key={i} row={row} odd={i % 2 === 1} />
          ))}
        </tbody>
      </Table>
      <ScrollBar>
        <ScrollButton type="button" aria-label="Scroll up"><Chevron /></ScrollButton>
        <Track><Thumb /></Track>
        <ScrollButton type="button" aria-label="Scroll down"><Chevron down /></ScrollButton>
      </ScrollBar>
    </List>
    <ToolBar>
      <Tool type="button" aria-label="Expand columns"><Arrows /></Tool>
      <Tool type="button" aria-label="Shrink columns" $state="off"><Arrows inward /></Tool>
      <Spacer />
      <Tool type="button" aria-label="Remote sensors"><Network /></Tool>
      <Elapsed>0:20:41</Elapsed>
      <Tool type="button" aria-label="Reset clock"><BigClock /></Tool>
      <Tool type="button" aria-label="Start logging"><Sheet /></Tool>
      <Tool type="button" aria-label="Settings"><Gear /></Tool>
      <Tool type="button" aria-label="Close sensors" $state="focus"><Cross /></Tool>
    </ToolBar>
  </Window>
);

export default function App() {
  return (
    <>
      <GlobalStyle />
      <Desktop>
        <Backdrop />
        <Graphs>
          {graphs.map((graph) => (
            <GraphPanel key={graph.title} graph={graph} />
          ))}
          <Caption>
            <h1>GAMING - WITCHER 3, PERFORMANCE, ON BATTERY</h1>
            <Pager />
          </Caption>
        </Graphs>
        <SensorWindow />
      </Desktop>
    </>
  );
}
